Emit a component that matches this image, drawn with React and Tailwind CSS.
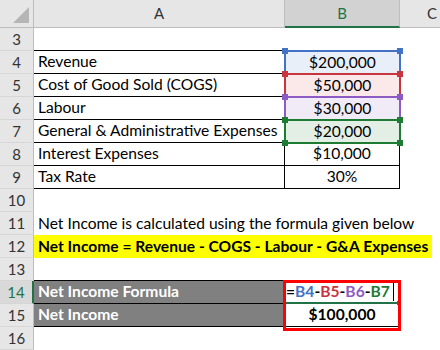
import React from 'react';

const font = { fontFamily: 'Lato, "Open Sans", sans-serif' };

const RefCell = ({ value, border, handle, bg, bottom }) => (
    <div className={`relative w-[115px] shrink-0 ${bg} flex items-center justify-center`}>
        <div className={`absolute -left-[1px] -top-[1px] -right-[1px] -bottom-[1px] border-2 ${border}`}></div>
        <span className={`absolute -left-[3px] -top-[3px] w-[6px] h-[6px] ${handle}`}></span>
        <span className={`absolute -right-[3px] -top-[3px] w-[6px] h-[6px] ${handle}`}></span>
        {bottom && <span className={`absolute -left-[3px] -bottom-[3px] w-[6px] h-[6px] ${handle}`}></span>}
        {bottom && <span className={`absolute -right-[3px] -bottom-[3px] w-[6px] h-[6px] ${handle}`}></span>}
        <span className="relative">{value}</span>
    </div>
);

const RowHead = ({ n, active }) => (
    <div
        className={`w-[34px] shrink-0 flex items-center justify-center text-[15px] border-b border-[#d6d6d6] ${
            active ? 'bg-[#d9d9d9] text-[#217346] border-r-2 border-r-[#217346]' : 'bg-[#e6e6e6] text-[#333] border-r border-r-[#bdbdbd]'
        }`}
    >
        {n}
    </div>
);

export default function App() {
    return (
        <div className="w-[440px] h-[350px] overflow-hidden bg-white text-[15.6px] text-black relative" style={font}>
            {/* column headers */}
            <div className="flex h-[28px] text-[15px]">
                <div className="w-[34px] shrink-0 bg-[#e6e6e6] border-r border-b border-[#bdbdbd] relative">
                    <div className="absolute right-[4px] bottom-[4px] w-0 h-0 border-l-[16px] border-l-transparent border-b-[16px] border-b-[#b5b5b5]"></div>
                </div>
                <div className="w-[251px] shrink-0 bg-[#e6e6e6] border-r border-b border-[#bdbdbd] flex items-center justify-center text-[#333]">A</div>
                <div className="w-[115px] shrink-0 bg-[#d2d2d2] border-r border-[#bdbdbd] border-b-2 border-b-[#217346] flex items-center justify-center text-[#217346]">B</div>
                <div className="w-[64px] shrink-0 bg-[#e6e6e6] border-b border-[#bdbdbd] flex items-center justify-center text-[#333]">C</div>
            </div>

            {/* row 3 */}
            <div className="flex h-[23px]">
                <RowHead n={3} />
                <div className="w-[251px] shrink-0 border-b border-black"></div>
            </div>

            <div className="flex h-[23px]">
                <RowHead n={4} />
                <div className="w-[251px] shrink-0 border-b border-black pl-[4px] flex items-center">Revenue</div>
                <RefCell value="$200,000" border="border-[#4472c4]" handle="bg-[#4472c4]" bg="bg-[#e9eff9]" />
            </div>
            <div className="flex h-[23px]">
                <RowHead n={5} />
                <div className="w-[251px] shrink-0 border-b border-black pl-[4px] flex items-center">Cost of Good Sold (COGS)</div>
                <RefCell value="$50,000" border="border-[#c8353f]" handle="bg-[#c8353f]" bg="bg-[#fbe9e9]" />
            </div>
            <div className="flex h-[23px]">
                <RowHead n={6} />
                <div className="w-[251px] shrink-0 border-b border-black pl-[4px] flex items-center">Labour</div>
                <RefCell value="$30,000" border="border-[#8c5bc4]" handle="bg-[#8c5bc4]" bg="bg-[#f1ebf7]" />
            </div>
            <div className="flex h-[23px]">
                <RowHead n={7} />
                <div className="w-[251px] shrink-0 border-b border-black pl-[4px] flex items-center whitespace-nowrap">General &amp; Administrative Expenses</div>
                <RefCell value="$20,000" border="border-[#1e7b34]" handle="bg-[#1e7b34]" bg="bg-[#e3efe4]" bottom />
            </div>
            <div className="flex h-[23px]">
                <RowHead n={8} />
                <div className="w-[251px] shrink-0 border-b border-r border-black pl-[4px] flex items-center">Interest Expenses</div>
                <div className="w-[115px] shrink-0 border-b border-r border-black flex items-center justify-center">$10,000</div>
            </div>
            <div className="flex h-[23px]">
                <RowHead n={9} />
                <div className="w-[251px] shrink-0 border-b border-r border-black pl-[4px] flex items-center">Tax Rate</div>
                <div className="w-[115px] shrink-0 border-b border-r border-black flex items-center justify-center">30%</div>
            </div>
            <div className="flex h-[23px]">
                <RowHead n={10} />
            </div>
            <div className="flex h-[23px]">
                <RowHead n={11} />
                <div className="pl-[4px] flex items-center whitespace-nowrap">Net Income is calculated using the formula given below</div>
            </div>
            <div className="flex h-[23px]">
                <RowHead n={12} />
                <div className="w-[398px] shrink-0 bg-[#ffff00] pl-[4px] flex items-center font-bold whitespace-nowrap">
                    Net Income = Revenue - COGS - Labour - G&amp;A Expenses
                </div>
            </div>
            <div className="flex h-[23px]">
                <RowHead n={13} />
                <div className="w-[251px] shrink-0 border-b border-black"></div>
                <div className="w-[115px] shrink-0 border-b border-black"></div>
            </div>
            <div className="flex h-[23px]">
                <RowHead n={14} active />
                <div className="w-[250px] shrink-0 bg-[#808080] border-b border-r border-black pl-[4px] flex items-center text-white font-bold">Net Income Formula</div>
                <div className="relative w-[115px] shrink-0 border-b-2 border-[#217346] pl-[2px] flex items-center font-bold">
                    <span>=</span>
                    <span className="text-[#4472c4]">B4</span>
                    <span>-</span>
                    <span className="text-[#c8353f]">B5</span>
                    <span>-</span>
                    <span className="text-[#8c5bc4]">B6</span>
                    <span>-</span>
                    <span className="text-[#1e7b34]">B7</span>
                    <span className="ml-[3px] w-[1px] h-[18px] bg-black"></span>
                    <span className="absolute -right-[2px] -bottom-[3px] w-[4px] h-[4px] bg-[#217346]"></span>
                </div>
            </div>
            <div className="flex h-[23px]">
                <RowHead n={15} />
                <div className="w-[251px] shrink-0 bg-[#808080] border-b border-r border-black pl-[4px] flex items-center text-white font-bold">Net Income</div>
                <div className="w-[115px] shrink-0 border-b border-r border-black flex items-center justify-center font-bold">$100,000</div>
            </div>
            <div className="flex h-[23px]">
                <RowHead n={16} />
            </div>

            {/* red highlight box */}
            <div className="absolute left-[283px] top-[280px] w-[118px] h-[51px] border-[3px] border-[#ff0000]"></div>
        </div>
    );
}
